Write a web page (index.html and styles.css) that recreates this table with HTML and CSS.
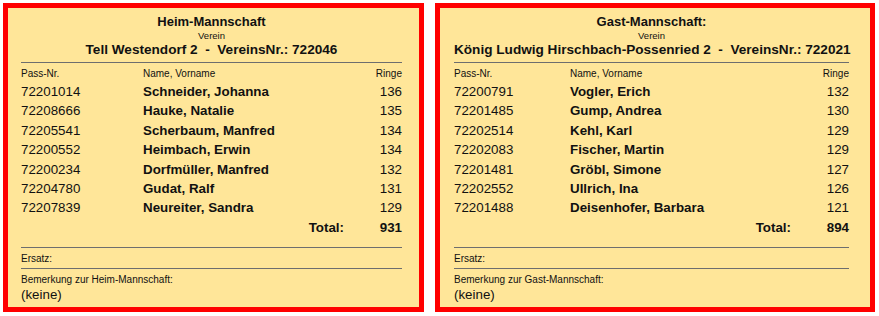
FILE: index.html
```html
<!DOCTYPE html>
<html lang="de">
<head>
<meta charset="utf-8">
<title>Mannschaften</title>
<link rel="stylesheet" href="styles.css">
</head>
<body>
<div class="board">
  <section class="team team--home">
    <header class="team-head">
      <div class="team-title">Heim-Mannschaft</div>
      <div class="team-label">Verein</div>
      <div class="team-club">Tell Westendorf 2&nbsp; - &nbsp;VereinsNr.: 722046</div>
    </header>
    <div class="roster">
      <div class="row row--head"><span>Pass-Nr.</span><span>Name, Vorname</span><span class="num">Ringe</span></div>
      <div class="row"><span>72201014</span><span class="name">Schneider, Johanna</span><span class="num">136</span></div>
      <div class="row"><span>72208666</span><span class="name">Hauke, Natalie</span><span class="num">135</span></div>
      <div class="row"><span>72205541</span><span class="name">Scherbaum, Manfred</span><span class="num">134</span></div>
      <div class="row"><span>72200552</span><span class="name">Heimbach, Erwin</span><span class="num">134</span></div>
      <div class="row"><span>72200234</span><span class="name">Dorfmüller, Manfred</span><span class="num">132</span></div>
      <div class="row"><span>72204780</span><span class="name">Gudat, Ralf</span><span class="num">131</span></div>
      <div class="row"><span>72207839</span><span class="name">Neureiter, Sandra</span><span class="num">129</span></div>
      <div class="row row--total"><span></span><span class="total-label">Total:</span><span class="num">931</span></div>
    </div>
    <div class="team-foot">
      <div class="small">Ersatz:</div>
      <div class="remark">
        <div class="small">Bemerkung zur Heim-Mannschaft:</div>
        <div class="remark-text">(keine)</div>
      </div>
    </div>
  </section>

  <section class="team team--guest">
    <header class="team-head">
      <div class="team-title">Gast-Mannschaft:</div>
      <div class="team-label">Verein</div>
      <div class="team-club">König Ludwig Hirschbach-Possenried 2&nbsp; - &nbsp;VereinsNr.: 722021</div>
    </header>
    <div class="roster">
      <div class="row row--head"><span>Pass-Nr.</span><span>Name, Vorname</span><span class="num">Ringe</span></div>
      <div class="row"><span>72200791</span><span class="name">Vogler, Erich</span><span class="num">132</span></div>
      <div class="row"><span>72201485</span><span class="name">Gump, Andrea</span><span class="num">130</span></div>
      <div class="row"><span>72202514</span><span class="name">Kehl, Karl</span><span class="num">129</span></div>
      <div class="row"><span>72202083</span><span class="name">Fischer, Martin</span><span class="num">129</span></div>
      <div class="row"><span>72201481</span><span class="name">Gröbl, Simone</span><span class="num">127</span></div>
      <div class="row"><span>72202552</span><span class="name">Ullrich, Ina</span><span class="num">126</span></div>
      <div class="row"><span>72201488</span><span class="name">Deisenhofer, Barbara</span><span class="num">121</span></div>
      <div class="row row--total"><span></span><span class="total-label">Total:</span><span class="num">894</span></div>
    </div>
    <div class="team-foot">
      <div class="small">Ersatz:</div>
      <div class="remark">
        <div class="small">Bemerkung zur Gast-Mannschaft:</div>
        <div class="remark-text">(keine)</div>
      </div>
    </div>
  </section>
</div>
</body>
</html>
```

FILE: styles.css
```css
* { box-sizing: border-box; }

html, body {
  margin: 0;
  padding: 0;
  background: #ffffff;
}

body {
  padding: 3px 0 0 3px;
  font-family: "Liberation Sans", Arial, sans-serif;
  color: #111111;
}

.board {
  display: flex;
  gap: 11px;
  align-items: flex-start;
}

.team {
  height: 309px;
  border: 5px solid #ff0000;
  background: #ffe699;
  display: flex;
  flex-direction: column;
}

.team--home {
  width: 421px;
  padding: 0 17px 0 13px;
  --name-col: 122px;
}

.team--guest {
  width: 440px;
  padding: 0 21px 0 14px;
  --name-col: 116px;
}

.team-head {
  text-align: center;
  padding-top: 6px;
  padding-bottom: 4px;
  border-bottom: 1px solid #6e6e6e;
}

.team-title {
  font-size: 13px;
  font-weight: bold;
  line-height: 16px;
}

.team-label {
  font-size: 9.5px;
  line-height: 12px;
}

.team-club {
  font-size: 13.6px;
  font-weight: bold;
  line-height: 16px;
  white-space: nowrap;
}

.roster {
  padding-top: 3px;
  padding-bottom: 10px;
  border-bottom: 1px solid #6e6e6e;
}

.row {
  display: grid;
  grid-template-columns: var(--name-col) 1fr 58px;
  font-size: 13.33px;
  line-height: 19.4px;
}

.row--head {
  font-size: 10px;
  line-height: 16px;
}

.name,
.row--total {
  font-weight: bold;
}

.num {
  text-align: right;
}

.total-label {
  text-align: right;
}

.team-foot {
  display: flex;
  flex-direction: column;
}

.small {
  font-size: 10px;
  line-height: 12px;
}

.team-foot > .small {
  padding: 5px 0 3px;
  border-bottom: 1px solid #6e6e6e;
}

.remark {
  padding-top: 5px;
}

.remark-text {
  font-size: 13.33px;
  line-height: 18px;
}
```
